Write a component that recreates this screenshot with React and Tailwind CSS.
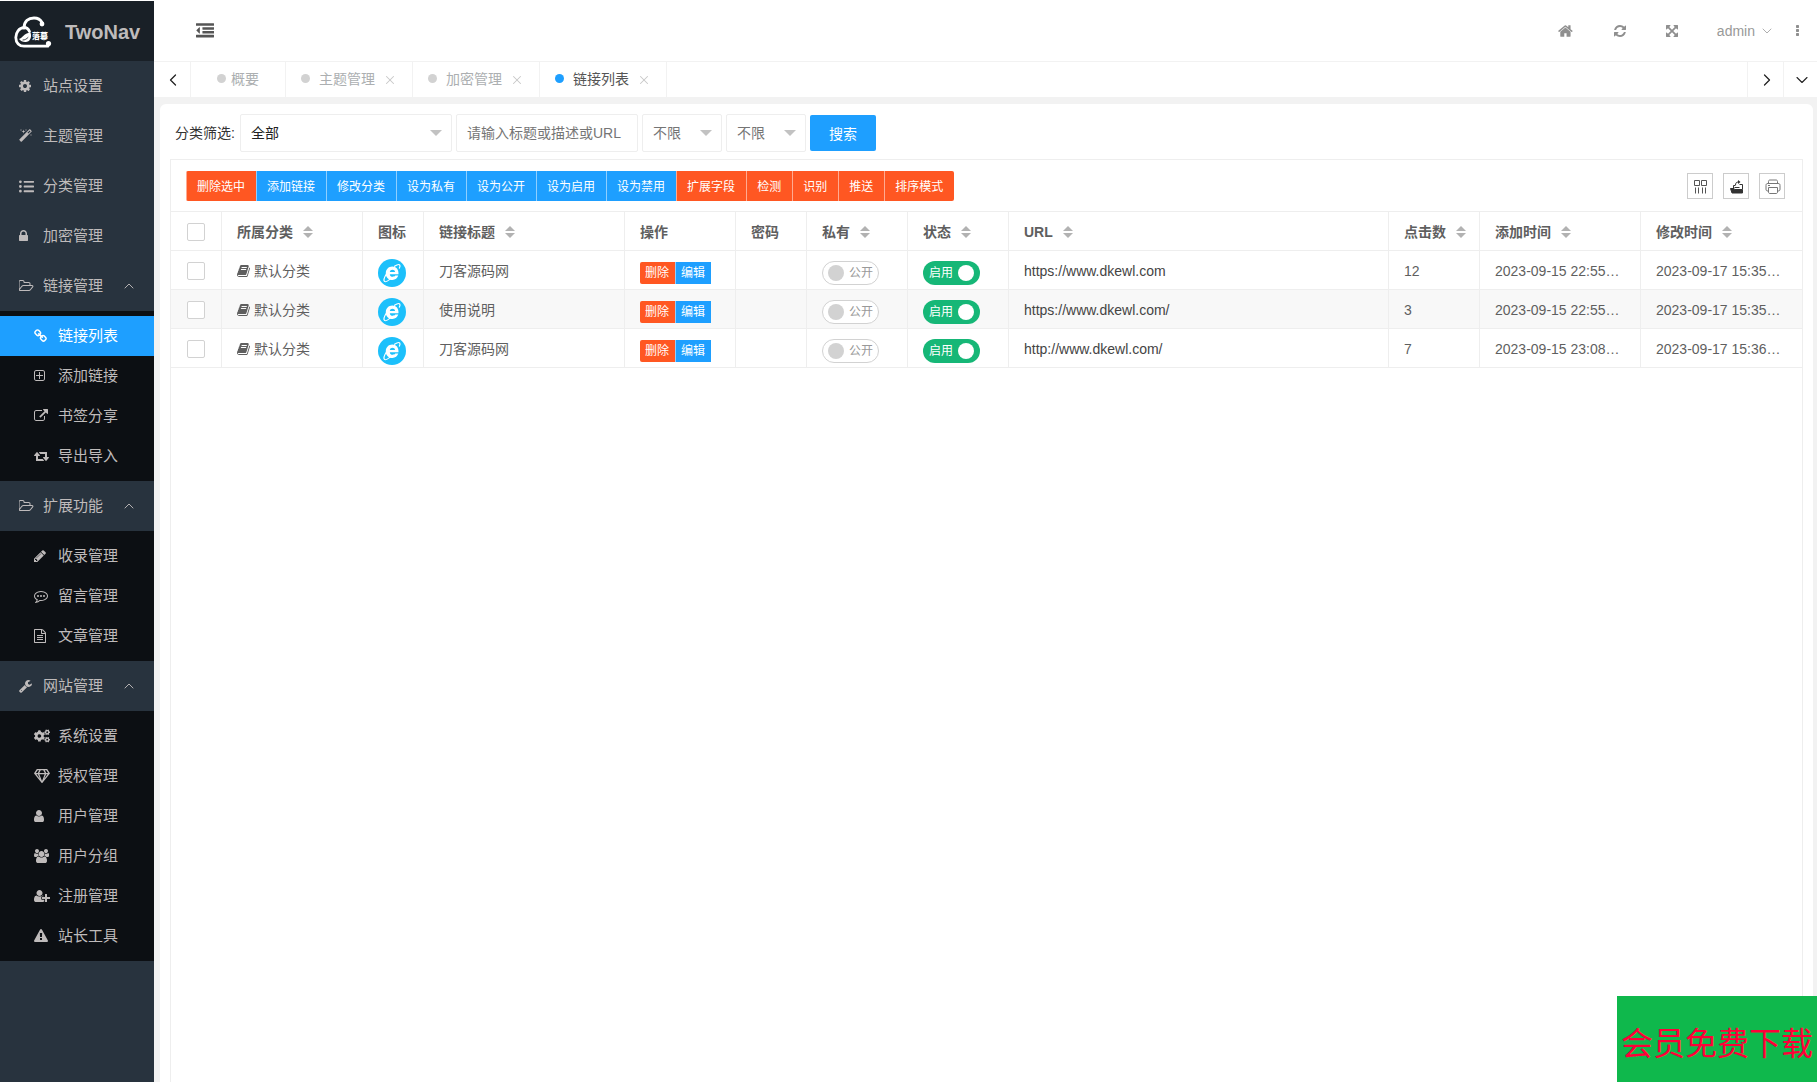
import React from "react";
import { FaListUl, FaCogs, FaRegGem } from "react-icons/fa";
import { ChevronLeft, ChevronRight, ChevronDown, ChevronUp, X } from "lucide-react";

const GLYPHS = {
  cog: [128, 1536, "M1152 896q0-106-75-181t-181-75-181 75-75 181 75 181 181 75 181-75 75-181zm512-109v222q0 12-8 23t-20 13l-185 28q-19 54-39 91 35 50 107 138 10 12 10 25t-9 23q-27 37-99 108t-94 71q-12 0-26-9l-138-108q-44 23-91 38-16 136-29 186-7 28-36 28h-222q-14 0-24.5-8.5t-11.5-21.5l-28-184q-49-16-90-37l-141 107q-10 9-25 9-14 0-25-11-126-114-165-168-7-10-7-23 0-12 8-23 15-21 51-66.5t54-70.5q-27-50-41-99l-183-27q-13-2-21-12.5t-8-23.5v-222q0-12 8-23t19-13l186-28q14-46 39-92-40-57-107-138-10-12-10-24 0-10 9-23 26-36 98.5-107.5t94.5-71.5q13 0 26 10l138 107q44-23 91-38 16-136 29-186 7-28 36-28h222q14 0 24.5 8.5t11.5 21.5l28 184q49 16 90 37l142-107q9-9 24-9 13 0 25 10 129 119 165 170 7 8 7 22 0 12-8 23-15 21-51 66.5t-54 70.5q26 50 41 98l183 28q13 2 21 12.5t8 23.5z"],
  magic: [64, 1664, "M1254 581l293-293-107-107-293 293zm447-293q0 27-18 45l-1286 1286q-18 18-45 18t-45-18l-198-198q-18-18-18-45t18-45l1286-1286q18-18 45-18t45 18l198 198q18 18 18 45zm-1351-190l98 30-98 30-30 98-30-98-98-30 98-30 30-98zm350 162l196 60-196 60-60 196-60-196-196-60 196-60 60-196zm930 478l98 30-98 30-30 98-30-98-98-30 98-30 30-98zm-640-640l98 30-98 30-30 98-30-98-98-30 98-30 30-98z"],
  lock: [320, 1152, "M640 768h512v-192q0-106-75-181t-181-75-181 75-75 181v192zm832 96v576q0 40-28 68t-68 28h-960q-40 0-68-28t-28-68v-576q0-40 28-68t68-28h32v-192q0-184 132-316t316-132 316 132 132 316v192h32q40 0 68 28t28 68z"],
  folder: [0, 1920, "M1717 931q0-35-53-35h-1088q-40 0-85.5 21.5t-71.5 52.5l-294 363q-18 24-18 40 0 35 53 35h1088q40 0 86-22t71-53l294-363q18-22 18-39zm-1141-163h768v-160q0-40-28-68t-68-28h-576q-40 0-68-28t-28-68v-64q0-40-28-68t-68-28h-320q-40 0-68 28t-28 68v853l256-315q44-53 116-87.5t140-34.5zm1269 163q0 62-46 120l-295 363q-43 53-116 87.5t-140 34.5h-1088q-92 0-158-66t-66-158v-960q0-92 66-158t158-66h320q92 0 158 66t66 158v32h544q92 0 158 66t66 158v160h192q54 0 99 24.5t67 70.5q15 32 15 68z"],
  link: [64, 1664, "M1520 1216q0-40-28-68l-208-208q-28-28-68-28-42 0-72 32 3 3 19 18.5t21.5 21.5 15 19 13 25.5 3.5 27.5q0 40-28 68t-68 28q-15 0-27.5-3.5t-25.5-13-19-15-21.5-21.5-18.5-19q-33 31-33 73 0 40 28 68l206 207q27 27 68 27 40 0 68-26l147-146q28-28 28-67zm-703-705q0-40-28-68l-206-207q-28-28-68-28-39 0-68 27l-147 146q-28 28-28 67 0 40 28 68l208 208q27 27 68 27 42 0 72-31-3-3-19-18.5t-21.5-21.5-15-19-13-25.5-3.5-27.5q0-40 28-68t68-28q15 0 27.5 3.5t25.5 13 19 15 21.5 21.5 18.5 19q33-31 33-73zm895 705q0 120-85 203l-147 146q-83 83-203 83-121 0-204-85l-206-207q-83-83-83-203 0-123 88-209l-88-88q-86 88-208 88-120 0-204-84l-208-208q-84-84-84-204t85-203l147-146q83-83 203-83 121 0 204 85l206 207q83 83 83 203 0 123-88 209l88 88q86-88 208-88 120 0 204 84l208 208q84 84 84 204z"],
  plus: [192, 1408, "M1344 800v64q0 14-9 23t-23 9h-352v352q0 14-9 23t-23 9h-64q-14 0-23-9t-9-23v-352h-352q-14 0-23-9t-9-23v-64q0-14 9-23t23-9h352v-352q0-14 9-23t23-9h64q14 0 23 9t9 23v352h352q14 0 23 9t9 23zm128 448v-832q0-66-47-113t-113-47h-832q-66 0-113 47t-47 113v832q0 66 47 113t113 47h832q66 0 113-47t47-113zm128-832v832q0 119-84.5 203.5t-203.5 84.5h-832q-119 0-203.5-84.5t-84.5-203.5v-832q0-119 84.5-203.5t203.5-84.5h832q119 0 203.5 84.5t84.5 203.5z"],
  external: [0, 1792, "M1408 928v320q0 119-84.5 203.5t-203.5 84.5h-832q-119 0-203.5-84.5t-84.5-203.5v-832q0-119 84.5-203.5t203.5-84.5h704q14 0 23 9t9 23v64q0 14-9 23t-23 9h-704q-66 0-113 47t-47 113v832q0 66 47 113t113 47h832q66 0 113-47t47-113v-320q0-14 9-23t23-9h64q14 0 23 9t9 23zm384-864v512q0 26-19 45t-45 19-45-19l-176-176-652 652q-10 10-23 10t-23-10l-114-114q-10-10-10-23t10-23l652-652-176-176q-19-19-19-45t19-45 45-19h512q26 0 45 19t19 45z"],
  retweet: [0, 1920, "M1280 1504q0 13-9.5 22.5t-22.5 9.5h-960q-8 0-13.5-2t-9-7-5.5-8-3-11.5-1-11.5v-600h-192q-26 0-45-19t-19-45q0-24 15-41l320-384q19-22 49-22t49 22l320 384q15 17 15 41 0 26-19 45t-45 19h-192v384h576q16 0 25 11l160 192q7 10 7 21zm640-416q0 24-15 41l-320 384q-20 23-49 23t-49-23l-320-384q-15-17-15-41 0-26 19-45t45-19h192v-384h-576q-16 0-25-12l-160-192q-7-9-7-20 0-13 9.5-22.5t22.5-9.5h960q8 0 13.5 2t9 7 5.5 8 3 11.5 1 11.5v600h192q26 0 45 19t19 45z"],
  pencil: [128, 1536, "M491 1536l91-91-235-235-91 91v107h128v128h107zm523-928q0-22-22-22-10 0-17 7l-542 542q-7 7-7 17 0 22 22 22 10 0 17-7l542-542q7-7 7-17zm-54-192l416 416-832 832h-416v-416zm683 96q0 53-37 90l-166 166-416-416 166-165q36-38 90-38 53 0 91 38l235 234q37 39 37 91z"],
  comment: [0, 1792, "M896 384q-204 0-381.5 69.5t-282 187.5-104.5 255q0 112 71.5 213.5t201.5 175.5l87 50-27 96q-24 91-70 172 152-63 275-171l43-38 57 6q69 8 130 8 204 0 381.5-69.5t282-187.5 104.5-255-104.5-255-282-187.5-381.5-69.5zm896 512q0 174-120 321.5t-326 233-450 85.5q-70 0-145-8-198 175-460 242-49 14-114 22h-5q-15 0-27-10.5t-16-27.5v-1q-3-4-.5-12t2-10 4.5-9.5l6-9 7-8.5 8-9q7-8 31-34.5t34.5-38 31-39.5 32.5-51 27-59 26-76q-157-89-247.5-220t-90.5-281q0-174 120-321.5t326-233 450-85.5 450 85.5 326 233 120 321.5zM384 896a128 128 0 1 0 256 0a128 128 0 1 0-256 0zM768 896a128 128 0 1 0 256 0a128 128 0 1 0-256 0zM1152 896a128 128 0 1 0 256 0a128 128 0 1 0-256 0z"],
  file: [128, 1536, "M1596 380q28 28 48 76t20 88v1152q0 40-28 68t-68 28h-1344q-40 0-68-28t-28-68v-1600q0-40 28-68t68-28h896q40 0 88 20t76 48zm-444-244v376h376q-10-29-22-41l-313-313q-12-12-41-22zm384 1528v-1024h-416q-40 0-68-28t-28-68v-416h-768v1536h1280zm-1024-864q0-14 9-23t23-9h704q14 0 23 9t9 23v64q0 14-9 23t-23 9h-704q-14 0-23-9t-9-23v-64zm736 224q14 0 23 9t9 23v64q0 14-9 23t-23 9h-704q-14 0-23-9t-9-23v-64q0-14 9-23t23-9h704zm0 256q14 0 23 9t9 23v64q0 14-9 23t-23 9h-704q-14 0-23-9t-9-23v-64q0-14 9-23t23-9h704z"],
  wrench: [64, 1664, "M448 1472q0-26-19-45t-45-19-45 19-19 45 19 45 45 19 45-19 19-45zm644-420l-682 682q-37 37-90 37-52 0-91-37l-106-108q-38-36-38-90 0-53 38-91l681-681q39 98 114.5 173.5t173.5 114.5zm634-435q0 39-23 106-47 134-164.5 217.5t-258.5 83.5q-185 0-316.5-131.5t-131.5-316.5 131.5-316.5 316.5-131.5q58 0 121.5 16.5t107.5 46.5q16 11 16 28t-16 28l-293 169v224l193 107q5-3 79-48.5t135.5-81 70.5-35.5q15 0 23.5 10t8.5 25z"],
  user: [256, 1280, "M1536 1399q0 109-62.5 187t-150.5 78h-854q-88 0-150.5-78t-62.5-187q0-85 8.5-160.5t31.5-152 58.5-131 94-89 134.5-34.5q131 128 313 128t313-128q76 0 134.5 34.5t94 89 58.5 131 31.5 152 8.5 160.5zm-256-887q0 159-112.5 271.5t-271.5 112.5-271.5-112.5-112.5-271.5 112.5-271.5 271.5-112.5 271.5 112.5 112.5 271.5z"],
  users: [0, 1920, "M593 896q-162 5-265 128h-134q-82 0-138-40.5t-56-118.5q0-353 124-353 6 0 43.5 21t97.5 42.5 119 21.5q67 0 133-23-5 37-5 66 0 159 93 256zm1071 637q0 120-73 189.5t-194 69.5h-874q-121 0-194-69.5t-73-189.5q0-53 3.5-103.5t14-109 26.5-108.5 43-97.5 62-81 85.5-53.5 111.5-20q10 0 43 21.5t73 48 107 48 135 21.5 135-21.5 107-48 73-48 43-21.5q61 0 111.5 20t85.5 53.5 62 81 43 97.5 26.5 108.5 14 109 3.5 103.5zm-1024-1277q0 106-75 181t-181 75-181-75-75-181 75-181 181-75 181 75 75 181zm704 384q0 159-112.5 271.5t-271.5 112.5-271.5-112.5-112.5-271.5 112.5-271.5 271.5-112.5 271.5 112.5 112.5 271.5zm576 225q0 78-56 118.5t-138 40.5h-134q-103-123-265-128 93-97 93-256 0-29-5-66 66 23 133 23 59 0 119-21.5t97.5-42.5 43.5-21q124 0 124 353zm-128-609q0 106-75 181t-181 75-181-75-75-181 75-181 181-75 181 75 75 181z"],
  userPlus: [0, 2048, "M704 896q-159 0-271.5-112.5t-112.5-271.5 112.5-271.5 271.5-112.5 271.5 112.5 112.5 271.5-112.5 271.5-271.5 112.5zm960 128h352q13 0 22.5 9.5t9.5 22.5v192q0 13-9.5 22.5t-22.5 9.5h-352v352q0 13-9.5 22.5t-22.5 9.5h-192q-13 0-22.5-9.5t-9.5-22.5v-352h-352q-13 0-22.5-9.5t-9.5-22.5v-192q0-13 9.5-22.5t22.5-9.5h352v-352q0-13 9.5-22.5t22.5-9.5h192q13 0 22.5 9.5t9.5 22.5v352zm-736 224q0 52 38 90t90 38h256v238q-68 50-171 50h-874q-121 0-194-69t-73-190q0-53 3.5-103.5t14-109 26.5-108.5 43-97.5 62-81 85.5-53.5 111.5-20q19 0 39 17 79 61 154.5 91.5t164.5 30.5 164.5-30.5 154.5-91.5q20-17 39-17 132 0 217 96h-223q-52 0-90 38t-38 90v192z"],
  warning: [0, 1792, "M1024 1375v-190q0-14-9.5-23.5t-22.5-9.5h-192q-13 0-22.5 9.5t-9.5 23.5v190q0 14 9.5 23.5t22.5 9.5h192q13 0 22.5-9.5t9.5-23.5zm-2-374l18-459q0-12-10-19-13-11-24-11h-220q-11 0-24 11-10 7-10 21l17 457q0 10 10 16.5t24 6.5h185q14 0 23.5-6.5t10.5-16.5zm-14-934l768 1408q35 63-2 126-17 29-46.5 46t-63.5 17h-1536q-34 0-63.5-17t-46.5-46q-37-63-2-126l768-1408q17-31 47-49t65-18 65 18 47 49z"],
  home: [64, 1664, "M1472 992v480q0 26-19 45t-45 19h-384v-384h-256v384h-384q-26 0-45-19t-19-45v-480q0-1 .5-3t.5-3l575-474 575 474q1 2 1 6zm223-69l-62 74q-8 9-21 11h-3q-13 0-21-7l-692-577-692 577q-12 8-24 7-13-2-21-11l-62-74q-8-10-7-23.5t11-21.5l719-599q32-26 76-26t76 26l244 204v-195q0-14 9-23t23-9h192q14 0 23 9t9 23v408l219 182q10 8 11 21.5t-7 23.5z"],
  refresh: [128, 1536, "M1639 1056q0 5-1 7-64 268-268 434.5t-478 166.5q-146 0-282.5-55t-243.5-157l-129 129q-19 19-45 19t-45-19-19-45v-448q0-26 19-45t45-19h448q26 0 45 19t19 45-19 45l-137 137q71 66 161 102t187 36q134 0 250-65t186-179q11-17 53-117 8-23 30-23h192q13 0 22.5 9.5t9.5 22.5zm25-800v448q0 26-19 45t-45 19h-448q-26 0-45-19t-19-45 19-45l138-138q-148-137-349-137-134 0-250 65t-186 179q-11 17-53 117-8 23-30 23h-199q-13 0-22.5-9.5t-9.5-22.5v-7q65-268 270-434.5t480-166.5q146 0 284 55.5t245 156.5l130-129q19-19 45-19t45 19 19 45z"],
  expand: [128, 1536, "M1411 541l-355 355 355 355 144-144q29-31 70-14 39 17 39 59v448q0 26-19 45t-45 19h-448q-42 0-59-40-17-39 14-69l144-144-355-355-355 355 144 144q31 30 14 69-17 40-59 40h-448q-26 0-45-19t-19-45v-448q0-42 40-59 39-17 69 14l144 144 355-355-355-355-144 144q-19 19-45 19-12 0-24-5-40-17-40-59v-448q0-26 19-45t45-19h448q42 0 59 40 17 39-14 69l-144 144 355 355 355-355-144-144q-31-30-14-69 17-40 59-40h448q26 0 45 19t19 45v448q0 42-39 59-13 5-25 5-26 0-45-19z"],
  outdent: [0, 1792, "M384 544v576q0 13-9.5 22.5t-22.5 9.5q-14 0-23-9l-288-288q-9-9-9-23t9-23l288-288q9-9 23-9 13 0 22.5 9.5t9.5 22.5zm1408 768v192q0 13-9.5 22.5t-22.5 9.5h-1728q-13 0-22.5-9.5t-9.5-22.5v-192q0-13 9.5-22.5t22.5-9.5h1728q13 0 22.5 9.5t9.5 22.5zm0-384v192q0 13-9.5 22.5t-22.5 9.5h-1088q-13 0-22.5-9.5t-9.5-22.5v-192q0-13 9.5-22.5t22.5-9.5h1088q13 0 22.5 9.5t9.5 22.5zm0-384v192q0 13-9.5 22.5t-22.5 9.5h-1088q-13 0-22.5-9.5t-9.5-22.5v-192q0-13 9.5-22.5t22.5-9.5h1088q13 0 22.5 9.5t9.5 22.5zm0-384v192q0 13-9.5 22.5t-22.5 9.5h-1728q-13 0-22.5-9.5t-9.5-22.5v-192q0-13 9.5-22.5t22.5-9.5h1728q13 0 22.5 9.5t9.5 22.5z"],
  book: [64, 1664, "M1703 478q40 57 18 129l-275 906q-19 64-76.5 107.5t-122.5 43.5h-923q-77 0-148.5-53.5t-99.5-131.5q-24-67-2-127 0-4 3-27t4-37q1-8-3-21.5t-3-19.5q2-11 8-21t16.5-23.5 16.5-23.5q23-38 45-91.5t30-91.5q3-10 .5-30t-.5-28q3-11 17-28t17-23q21-36 42-92t25-90q1-9-2.5-32t.5-28q4-13 22-30.5t22-22.5q19-26 42.5-84.5t27.5-96.5q1-8-3-25.5t-2-26.5q2-8 9-18t18-23 17-21q8-12 16.5-30.5t15-35 16-36 19.5-32 26.5-23.5 36-11.5 47.5 5.5l-1 3q38-9 51-9h761q74 0 114 56t18 130l-274 906q-36 119-71.5 153.5t-128.5 34.5h-869q-27 0-38 15-11 16-1 43 24 70 144 70h923q29 0 56-15.5t35-41.5l300-987q7-22 5-57 38 15 59 43zm-1064 2q-4 13 2 22.5t20 9.5h608q13 0 25.5-9.5t16.5-22.5l21-64q4-13-2-22.5t-20-9.5h-608q-13 0-25.5 9.5t-16.5 22.5zm-83 256q-4 13 2 22.5t20 9.5h608q13 0 25.5-9.5t16.5-22.5l21-64q4-13-2-22.5t-20-9.5h-608q-13 0-25.5 9.5t-16.5 22.5z"],
  dots: [704, 384, "M1088 1248v192q0 40-28 68t-68 28h-192q-40 0-68-28t-28-68v-192q0-40 28-68t68-28h192q40 0 68 28t28 68zm0-512v192q0 40-28 68t-68 28h-192q-40 0-68-28t-28-68v-192q0-40 28-68t68-28h192q40 0 68 28t28 68zm0-512v192q0 40-28 68t-68 28h-192q-40 0-68-28t-28-68v-192q0-40 28-68t68-28h192q40 0 68 28t28 68z"],
};

function Glyph({ name, className = "h-3.5" }) {
  if (name === "list") return <FaListUl size={15} aria-hidden="true" />;
  if (name === "cogs") return <FaCogs size={16} aria-hidden="true" />;
  if (name === "gem") return <FaRegGem size={16} aria-hidden="true" />;
  const [x, w, d] = GLYPHS[name];
  return (
    <svg viewBox={`${x} 0 ${w} 1792`} className={`${className} w-auto shrink-0`} fill="currentColor" aria-hidden="true">
      <path d={d} />
    </svg>
  );
}

const MENU = [
  { icon: "cog", label: "站点设置" },
  { icon: "magic", label: "主题管理" },
  { icon: "list", label: "分类管理" },
  { icon: "lock", label: "加密管理" },
  {
    icon: "folder",
    label: "链接管理",
    items: [["link", "链接列表"], ["plus", "添加链接"], ["external", "书签分享"], ["retweet", "导出导入"]],
  },
  {
    icon: "folder",
    label: "扩展功能",
    items: [["pencil", "收录管理"], ["comment", "留言管理"], ["file", "文章管理"]],
  },
  {
    icon: "wrench",
    label: "网站管理",
    items: [["cogs", "系统设置"], ["gem", "授权管理"], ["user", "用户管理"], ["users", "用户分组"], ["userPlus", "注册管理"], ["warning", "站长工具"]],
  },
];

function Logo() {
  return (
    <svg viewBox="0 0 38 34" className="h-[34px] w-[38px]" fill="none" stroke="#fff" strokeLinecap="round" aria-hidden="true">
      <path d="M10 13C10 6 14.500 3 20 3c4 0 6.500 1.500 8 4.500" strokeWidth="2.800" />
      <circle cx="28" cy="9" r="2.400" fill="#fff" stroke="none" />
      <path d="M15.500 16.500C14.500 14 12.500 12.500 10 12.500 5 13 1.800 17.500 1.800 22.500 1.800 28 5.500 31.200 10 31.200h24" strokeWidth="2.800" />
      <circle cx="34.500" cy="28.500" r="2.600" fill="#fff" stroke="none" />
      <path d="M5 24c3-.5 4.500-5.500 11.500-6.500 1 3 1 8-3.500 9.300-3.500 1-6-.8-8-2.800z" fill="#fff" stroke="none" />
      <path d="M9 25c2 0 3.500-1 5-2.500" stroke="#192027" strokeWidth=".8" />
      <text x="18" y="24" fontSize="8" fontWeight="900" fill="#fff" stroke="none" fontFamily="Noto Sans CJK SC, sans-serif">落幕</text>
    </svg>
  );
}

function Sidebar() {
  return (
    <aside className="flex w-[154px] shrink-0 flex-col bg-[#28333e] text-[15px] text-[#bfbbbb]">
      <a href="#home" className="flex h-[61px] items-center gap-[13px] border-t border-white bg-[#192027] pt-0.5 pl-3.5">
        <Logo />
        <h1 className="text-xl font-bold">TwoNav</h1>
      </a>
      <nav>
        {MENU.map((group) => (
          <div key={group.label}>
            <a href={`#${group.label}`} className="flex h-[50px] items-center pl-[19px]">
              <span className="flex w-6 items-center"><Glyph name={group.icon} /></span>
              {group.label}
              {group.items && <ChevronUp size={16} strokeWidth={1.4} className="ml-[18px]" />}
            </a>
            {group.items && (
              <div className="bg-[#0c0f13] py-[5px]">
                {group.items.map(([icon, label]) => (
                  <a
                    key={label}
                    href={`#${label}`}
                    className={icon === "link" ? "flex h-10 items-center bg-[#1e9fff] pl-[34px] text-white" : "flex h-10 items-center pl-[34px]"}
                  >
                    <span className="flex w-6 items-center"><Glyph name={icon} /></span>
                    {label}
                  </a>
                ))}
              </div>
            )}
          </div>
        ))}
      </nav>
    </aside>
  );
}

function TopBar() {
  return (
    <header className="flex h-[61px] items-center justify-between bg-white pr-[13px] pl-[42px] text-[#8f8f8f]">
      <button type="button" aria-label="收起菜单" className="text-[#555]"><Glyph name="outdent" className="h-[18px]" /></button>
      <div className="flex items-center">
        <button type="button" aria-label="主页" className="flex w-[54px] justify-center"><Glyph name="home" className="h-4" /></button>
        <button type="button" aria-label="刷新" className="flex w-[54px] justify-center"><Glyph name="refresh" className="h-3.5" /></button>
        <button type="button" aria-label="全屏" className="flex w-[50px] justify-center"><Glyph name="expand" className="h-3.5" /></button>
        <button type="button" className="ml-5 flex items-center gap-1 text-sm text-[#999]">
          admin
          <ChevronDown size={16} strokeWidth={1.2} />
        </button>
        <button type="button" aria-label="更多" className="ml-[21px] w-2"><Glyph name="dots" className="h-3.5" /></button>
      </div>
    </header>
  );
}

const TABS = [
  { label: "概要" },
  { label: "主题管理", closable: true },
  { label: "加密管理", closable: true },
  { label: "链接列表", closable: true, active: true },
];

function TabBar() {
  return (
    <div className="flex h-9 border-t border-[#f2f2f2] bg-white text-sm text-[#acafb1]">
      <button type="button" aria-label="向左" className="flex w-[37px] items-center justify-center border-r border-[#f2f2f2] pl-0.5 text-[#222]">
        <ChevronLeft size={20} strokeWidth={1.5} />
      </button>
      {TABS.map((tab) => (
        <div
          key={tab.label}
          className={tab.closable ? "flex w-[127px] items-center border-r border-[#f2f2f2] pb-0.5 pl-[15px]" : "flex w-[95px] items-center justify-center border-r border-[#f2f2f2] pb-0.5"}
        >
          <span className={tab.active ? "size-[9px] rounded-full bg-[#1e9fff]" : "size-[9px] rounded-full bg-[#d2d2d2]"} />
          <button type="button" className={tab.active ? "ml-[9px] text-[#555]" : tab.closable ? "ml-[9px]" : "ml-[5px]"}>{tab.label}</button>
          {tab.closable && (
            <button type="button" aria-label={`关闭${tab.label}`} className="ml-2 pt-0.5 text-[#c8c8c8]"><X size={14} strokeWidth={1.8} /></button>
          )}
        </div>
      ))}
      <button type="button" aria-label="向右" className="ml-auto flex w-9 items-center justify-center border-l border-[#f2f2f2] pl-0.5 text-[#222]">
        <ChevronRight size={20} strokeWidth={1.5} />
      </button>
      <button type="button" aria-label="标签操作" className="flex w-[34px] items-center justify-center border-l border-[#f2f2f2] pl-0.5 text-[#222]">
        <ChevronDown size={20} strokeWidth={1.3} />
      </button>
    </div>
  );
}

function SelectBox({ label, value, wide }) {
  return (
    <div className={wide ? "relative w-[212px]" : "relative w-20"}>
      <select
        aria-label={label}
        defaultValue={value}
        className={wide ? "h-[38px] w-full appearance-none rounded-xs border border-[#eee] bg-white px-2.5 text-[#222]" : "h-[38px] w-full appearance-none rounded-xs border border-[#eee] bg-white px-2.5 text-[#757575]"}
      >
        <option>{value}</option>
      </select>
      <span className="pointer-events-none absolute top-4 right-2.5 border-x-6 border-t-6 border-x-transparent border-t-[#c2c2c2]" />
    </div>
  );
}

function Filters() {
  return (
    <form className="flex items-center gap-1 pl-[5px] text-sm" onSubmit={(e) => e.preventDefault()}>
      <span className="w-[61px] whitespace-nowrap text-[#333]">分类筛选:</span>
      <SelectBox label="分类筛选" value="全部" wide />
      <input
        type="text"
        aria-label="关键字"
        placeholder="请输入标题或描述或URL"
        className="h-[38px] w-[182px] rounded-xs border border-[#eee] px-2.5 placeholder:text-[#757575]"
      />
      <SelectBox label="私有" value="不限" />
      <SelectBox label="状态" value="不限" />
      <button type="submit" className="h-9 w-[66px] rounded-xs bg-[#1e9fff] pt-0.5 text-white">搜索</button>
    </form>
  );
}

const ACTIONS = [
  ["删除选中", "danger"], ["添加链接"], ["修改分类"], ["设为私有"], ["设为公开"], ["设为启用"], ["设为禁用"],
  ["扩展字段", "danger"], ["检测", "danger"], ["识别", "danger"], ["推送", "danger"], ["排序模式", "danger"],
];

function Toolbar() {
  return (
    <div className="flex h-[51px] items-center justify-between pr-[17px] pl-[15px]">
      <div className="flex overflow-hidden rounded-xs text-xs text-white">
        {ACTIONS.map(([label, kind]) => (
          <button
            key={label}
            type="button"
            className={
              kind
                ? "h-[30px] border-l border-white/50 bg-[#ff5722] pt-0.5 pr-[11px] pl-2.5"
                : "h-[30px] border-l border-white/50 bg-[#1e9fff] pt-0.5 pr-[11px] pl-2.5"
            }
          >
            {label}
          </button>
        ))}
      </div>
      <div className="flex gap-2.5 text-[#555]">
        <button type="button" aria-label="筛选列" className="flex size-[26px] items-center justify-center border border-[#ccc] pt-0.5 pl-0.5">
          <svg viewBox="0 0 14 14" className="size-3.5" fill="none" stroke="currentColor" aria-hidden="true">
            <path d="M.5.500h5v5h-5zM7.500 .500h5v5h-5zM1.500 7.500v6M4.500 7.500v6M8.500 7.500v6M11.500 7.500v6" />
          </svg>
        </button>
        <button type="button" aria-label="导出" className="flex size-[26px] items-center justify-center border border-[#ccc] pt-0.5 pl-0.5">
          <svg viewBox="0 0 14 14" className="size-3.5" fill="none" stroke="#333" aria-hidden="true">
            <path d="M.5 8.500h3.500l1 1h7.500v3.500H2z" fill="#333" />
            <path d="M3.500 8.500V5.500h2M9.500 4.500h3V9M5.500 5c0-2 1-3 3-3M4.500 7.500h5" />
            <path d="M8 0l2.500 2L8 4z" fill="#333" stroke="none" />
          </svg>
        </button>
        <button type="button" aria-label="打印" className="flex size-[26px] items-center justify-center border border-[#ccc] pt-0.5 pl-0.5">
          <svg viewBox="0 0 16 16" className="size-4" fill="none" stroke="#777" aria-hidden="true">
            <path d="M3.500 4.500v-2c0-1 .5-1.500 1.500-1.500h6c1 0 1.500.5 1.500 1.500v2M3.500 12H3c-1.500 0-2-.5-2-2V6.500c0-1.500.5-2 2-2h10c1.500 0 2 .5 2 2V10c0 1.500-.5 2-2 2h-.5" />
            <path d="M3.500 8.500h9v4.500c0 1-.5 1.500-1.500 1.500H5c-1 0-1.500-.5-1.500-1.500zM3 6.500h2" />
          </svg>
        </button>
      </div>
    </div>
  );
}

const COLUMNS = [
  { label: "所属分类", sort: true, width: "w-[141px]" },
  { label: "图标", width: "w-[61px]" },
  { label: "链接标题", sort: true, width: "w-[201px]" },
  { label: "操作", width: "w-[111px]" },
  { label: "密码", width: "w-[71px]" },
  { label: "私有", sort: true, width: "w-[101px]" },
  { label: "状态", sort: true, width: "w-[101px]" },
  { label: "URL", sort: true, width: "w-auto" },
  { label: "点击数", sort: true, width: "w-[91px]" },
  { label: "添加时间", sort: true, width: "w-[161px]" },
  { label: "修改时间", sort: true, width: "w-[161px]" },
];

const ROWS = [
  { title: "刀客源码网", url: "https://www.dkewl.com", clicks: 12, added: "2023-09-15 22:55…", edited: "2023-09-17 15:35…" },
  { title: "使用说明", url: "https://www.dkewl.com/", clicks: 3, added: "2023-09-15 22:55…", edited: "2023-09-17 15:35…" },
  { title: "刀客源码网", url: "http://www.dkewl.com/", clicks: 7, added: "2023-09-15 23:08…", edited: "2023-09-17 15:36…" },
];

function Sorter() {
  return (
    <span className="flex flex-col gap-0.5">
      <span className="border-x-5 border-b-5 border-x-transparent border-b-[#b2b2b2]" />
      <span className="border-x-5 border-t-5 border-x-transparent border-t-[#b2b2b2]" />
    </span>
  );
}

function Tick({ label }) {
  return (
    <input
      type="checkbox"
      aria-label={label}
      className="block size-[18px] appearance-none rounded-xs border border-[#d2d2d2] bg-white checked:bg-[#1e9fff]"
    />
  );
}

function BrowserIcon() {
  return (
    <svg viewBox="0 0 28 28" className="mt-1 size-7" aria-hidden="true">
      <circle cx="14" cy="14" r="14" fill="#1cc0fb" />
      <path d="M20.500 15.200h-8.700c.2 1.800 1.300 2.600 2.900 2.600 1.200 0 2.100-.4 2.600-1.200h3c-.9 2.800-3 4.400-5.800 4.400-4 0-6.700-2.600-6.700-6.600s2.800-6.800 6.500-6.800c4 0 6.500 2.900 6.200 7.600zm-8.700-2.200h5.300c-.2-1.500-1.200-2.300-2.600-2.300s-2.400.8-2.700 2.300z" fill="#fff" />
      <path d="M16.500 7.300c2.500-1.600 4.700-2.100 5.300-1.200.4.600.2 1.700-.4 3M8.700 14.500c-2.400 3.700-3.200 7-2.200 7.900.8.700 2.900-.1 5.300-2" fill="none" stroke="#fff" strokeWidth="1.200" strokeLinecap="round" />
    </svg>
  );
}

function Cells({ row }) {
  return (
    <>
      <td><span className="flex items-center gap-1"><Glyph name="book" />默认分类</span></td>
      <td><BrowserIcon /></td>
      <td>{row.title}</td>
      <td>
        <span className="mt-1 flex overflow-hidden rounded-xs text-xs text-white">
          <button type="button" className="h-[22px] bg-[#ff5722] pr-1.5 pl-[5px]">删除</button>
          <button type="button" className="h-[22px] border-l border-white/50 bg-[#1e9fff] pr-1.5 pl-[5px]">编辑</button>
        </span>
      </td>
      <td />
      <td>
        <button type="button" role="switch" aria-checked="false" className="mt-1 flex h-6 w-[57px] items-center justify-between rounded-full border border-[#d2d2d2] bg-white px-[5px] text-xs text-[#999]">
          <span className="size-4 rounded-full bg-[#d2d2d2]" />
          公开
        </button>
      </td>
      <td>
        <button type="button" role="switch" aria-checked="true" className="mt-1 flex h-6 w-[57px] items-center justify-between rounded-full bg-[#16b777] px-1.5 text-xs text-white">
          启用
          <span className="size-4 rounded-full bg-white" />
        </button>
      </td>
      <td className="text-[#444]">{row.url}</td>
      <td>{row.clicks}</td>
      <td>{row.added}</td>
      <td>{row.edited}</td>
    </>
  );
}

function LinkTable() {
  return (
    <table className="w-full table-fixed border-separate border-spacing-0 border-t border-[#eee] text-left text-sm text-[#5f5f5f] [&_td]:h-[39px] [&_td]:border-r [&_td]:border-b [&_td]:border-[#eee] [&_td]:px-[15px] [&_td]:pt-0.5 [&_td]:pb-0 [&_td]:whitespace-nowrap [&_td:first-child]:pl-4 [&_td:last-child]:border-r-0 [&_th]:h-[39px] [&_th]:border-r [&_th]:border-b [&_th]:border-[#eee] [&_th]:px-[15px] [&_th]:pt-0.5 [&_th]:pb-0 [&_th:first-child]:pl-4 [&_th:last-child]:border-r-0">
      <thead>
        <tr>
          <th className="w-[51px]"><Tick label="全选" /></th>
          {COLUMNS.map((col) => (
            <th key={col.label} className={col.width}>
              <span className="flex items-center gap-2.5 whitespace-nowrap font-bold">
                {col.label}
                {col.sort && <Sorter />}
              </span>
            </th>
          ))}
        </tr>
      </thead>
      <tbody>
        {ROWS.map((row) => (
          <tr key={row.url} className="even:bg-[#f8f8f8]">
            <td><Tick label={`选择 ${row.url}`} /></td>
            <Cells row={row} />
          </tr>
        ))}
      </tbody>
    </table>
  );
}

export default function App() {
  return (
    <div className="flex min-h-screen bg-[#f2f2f2] font-['Liberation_Sans','Noto_Sans_CJK_SC',sans-serif]">
      <Sidebar />
      <div className="flex min-w-0 grow flex-col">
        <TopBar />
        <TabBar />
        <main className="mt-[7px] mr-1 ml-1.5 flex grow flex-col rounded-t-md bg-white px-2.5 pt-2.5">
          <Filters />
          <section className="mt-[7px] grow border border-b-0 border-[#eee]">
            <Toolbar />
            <LinkTable />
          </section>
        </main>
      </div>
      <a href="#vip" className="fixed right-0 bottom-0 flex h-[86px] w-[200px] items-center justify-center bg-[#0fb84c] pt-2.5 text-[32px] whitespace-nowrap text-[#ff0038]">
        会员免费下载
      </a>
    </div>
  );
}
